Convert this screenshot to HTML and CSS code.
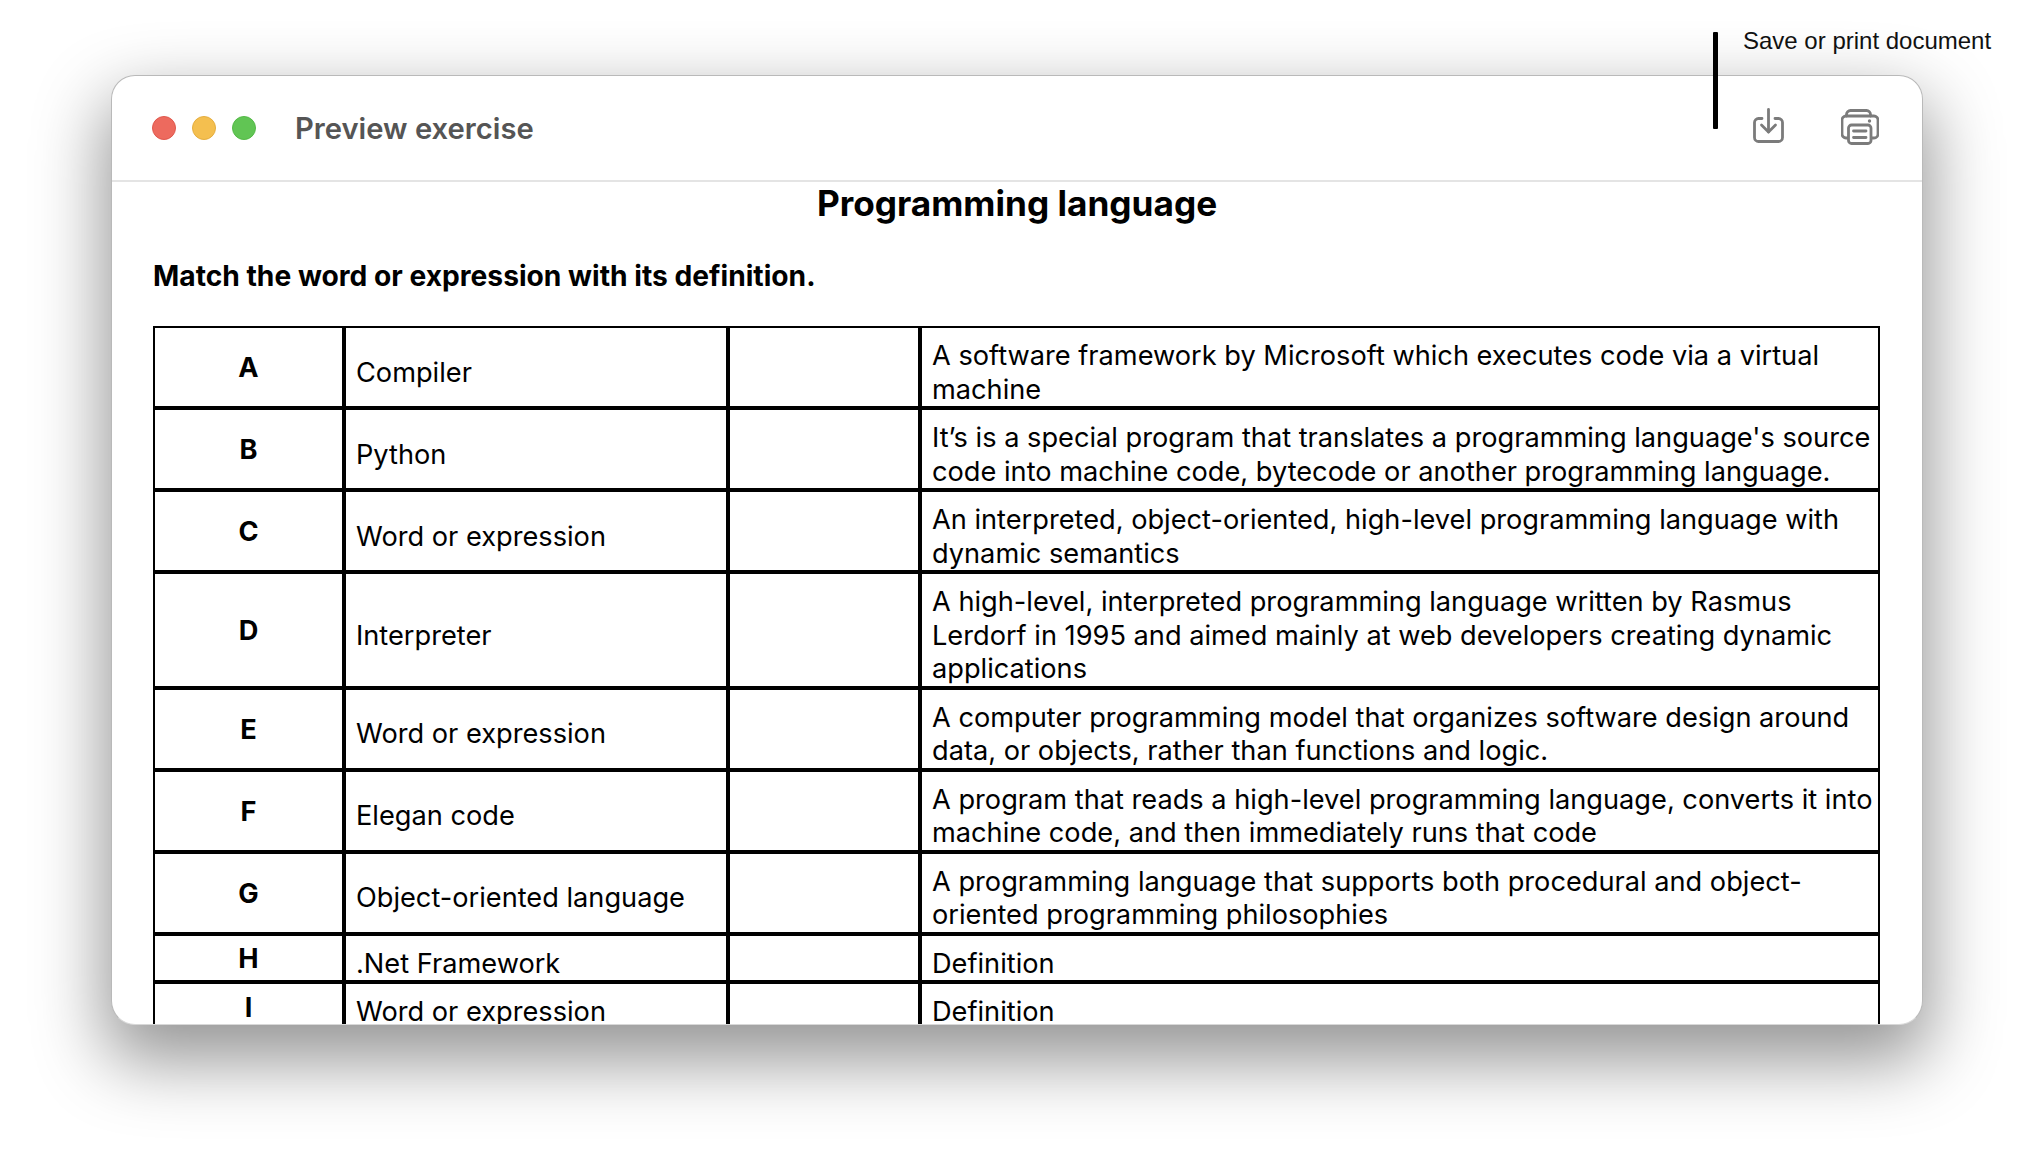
FILE: index.html
```html
<!DOCTYPE html>
<html lang="en">
  <head>
    <meta charset="utf-8" />
    <meta name="viewport" content="width=device-width, initial-scale=1.0" />
    <title>Preview exercise</title>
    <link rel="stylesheet" href="styles.css">
  </head>
  <body>
    <div class="callout-line"></div>
    <div class="callout-text">Save or print document</div>

    <section class="window">
      <header class="titlebar">
        <div class="lights">
          <span class="light red"></span>
          <span class="light yellow"></span>
          <span class="light green"></span>
        </div>
        <div class="window-title">Preview exercise</div>
        <div class="tools">
          <svg class="tool-save" width="31" height="35" viewBox="0 0 31 35" fill="none" stroke="#7b7b7b" stroke-width="2.800" stroke-linecap="round" stroke-linejoin="round">
            <path d="M9 10.500H5.500a4 4 0 0 0-4 4v15a4 4 0 0 0 4 4h20a4 4 0 0 0 4-4v-15a4 4 0 0 0-4-4H22" />
            <path d="M15.500 1.500V24" />
            <path d="M8.500 17l7 7 7-7" />
          </svg>
          <svg class="tool-print" width="38" height="36" viewBox="0 0 38 36" fill="none" stroke="#7b7b7b" stroke-width="2.800" stroke-linecap="round" stroke-linejoin="round">
            <path d="M5.500 7V5.500a4 4 0 0 1 4-4h16a4 4 0 0 1 4 4V7" />
            <path d="M7 29H5a4 4 0 0 1-4-4V11a4 4 0 0 1 4-4h28a4 4 0 0 1 4 4v14a4 4 0 0 1-4 4h-3" />
            <rect x="7.500" y="16" width="22.500" height="18.500" rx="3" fill="#fff" />
            <path d="M12.500 22h12.500M12.500 28.500h12.500" />
            <circle cx="28.500" cy="12" r="1.700" fill="#7b7b7b" stroke="none" />
          </svg>
        </div>
      </header>

      <div class="sheet">
        <h1>Programming language</h1>
        <p class="instruction">Match the word or expression with its definition.</p>

        <table class="match-table">
          <colgroup>
            <col class="col-letter" />
            <col class="col-word" />
            <col class="col-answer" />
            <col />
          </colgroup>
          <tr>
            <th>A</th>
            <td>Compiler</td>
            <td></td>
            <td>A software framework by Microsoft which executes code via a virtual machine</td>
          </tr>
          <tr>
            <th>B</th>
            <td>Python</td>
            <td></td>
            <td>It’s is a special program that translates a programming language's source code into machine code, bytecode or another programming language.</td>
          </tr>
          <tr>
            <th>C</th>
            <td>Word or expression</td>
            <td></td>
            <td>An interpreted, object-oriented, high-level programming language with dynamic semantics</td>
          </tr>
          <tr>
            <th>D</th>
            <td>Interpreter</td>
            <td></td>
            <td>A high-level, interpreted programming language written by Rasmus Lerdorf in 1995 and aimed mainly at web developers creating dynamic applications</td>
          </tr>
          <tr>
            <th>E</th>
            <td>Word or expression</td>
            <td></td>
            <td>A computer programming model that organizes software design around data, or objects, rather than functions and logic.</td>
          </tr>
          <tr>
            <th>F</th>
            <td>Elegan code</td>
            <td></td>
            <td>A program that reads a high-level programming language, converts it into machine code, and then immediately runs that code</td>
          </tr>
          <tr>
            <th>G</th>
            <td>Object-oriented language</td>
            <td></td>
            <td>A programming language that supports both procedural and object-oriented programming philosophies</td>
          </tr>
          <tr>
            <th>H</th>
            <td>.Net Framework</td>
            <td></td>
            <td>Definition</td>
          </tr>
          <tr>
            <th>I</th>
            <td>Word or expression</td>
            <td></td>
            <td>Definition</td>
          </tr>
        </table>
      </div>
    </section>
  </body>
</html>
```

FILE: styles.css
```css
html,
body {
  margin: 0;
  height: 100%;
  overflow: hidden;
  background: #fff;
}

body {
  position: relative;
  padding: 75px 0 0 111px;
  box-sizing: border-box;
  font-family: Inter, "Liberation Sans", sans-serif;
  color: #000;
}

/* annotation above the window */
.callout-line {
  position: absolute;
  z-index: 2;
  left: 1713px;
  top: 32px;
  width: 5px;
  height: 97px;
  background: #000;
  border-radius: 1px;
}

.callout-text {
  position: absolute;
  left: 1743px;
  top: 27px;
  font-family: "Liberation Sans", Arial, sans-serif;
  font-size: 24px;
  line-height: 28px;
  color: #111;
}

.window {
  width: 1812px;
  height: 950px;
  box-sizing: border-box;
  overflow: hidden;
  background: #fff;
  border: 1px solid #b9b9b9;
  border-bottom-color: #d8d8d8;
  border-radius: 24px;
  box-shadow: 0 30px 70px 6px rgba(0, 0, 0, 0.42);
}

.titlebar {
  display: flex;
  align-items: center;
  height: 104px;
  padding: 0 43px 0 40px;
  border-bottom: 2px solid #e4e4e4;
}

.lights {
  display: flex;
  gap: 16px;
}

.light {
  width: 24px;
  height: 24px;
  border-radius: 50%;
  box-sizing: border-box;
}

.red {
  background: #ed6a5e;
  border: 1px solid #e0584d;
}

.yellow {
  background: #f4bf4f;
  border: 1px solid #e5ae3f;
}

.green {
  background: #61c554;
  border: 1px solid #54b947;
}

.window-title {
  margin-left: 39px;
  font-size: 29.200px;
  font-weight: 600;
  color: #555;
}

.tools {
  margin-left: auto;
  padding-bottom: 2px;
  display: flex;
  align-items: center;
  gap: 57px;
}

.tool-save {
  margin-bottom: 3px;
}

.sheet {
  padding: 0 41px;
}

h1 {
  margin: 0;
  font-size: 35.200px;
  line-height: 42px;
  font-weight: 700;
  text-align: center;
}

.instruction {
  margin: 35px 0 0;
  font-size: 28.200px;
  line-height: 34px;
  font-weight: 700;
}

.match-table {
  margin-top: 33px;
  width: 1727px;
  table-layout: fixed;
  border-collapse: separate;
  border-spacing: 0;
  border-top: 2px solid #000;
  border-left: 2px solid #000;
  font-size: 27.200px;
  line-height: 33.500px;
}

.col-letter {
  width: 191px;
}

.col-word {
  width: 384px;
}

.col-answer {
  width: 192px;
}

.match-table th,
.match-table td {
  border-right: 4px solid #000;
  border-bottom: 4px solid #000;
  vertical-align: middle;
}

.match-table th {
  font-weight: 700;
  padding: 2px 0 0;
  text-align: center;
}

.match-table td {
  padding: 11px 0 0 10px;
  font-weight: 400;
}

.match-table td:last-child {
  border-right-width: 2px;
}
```
